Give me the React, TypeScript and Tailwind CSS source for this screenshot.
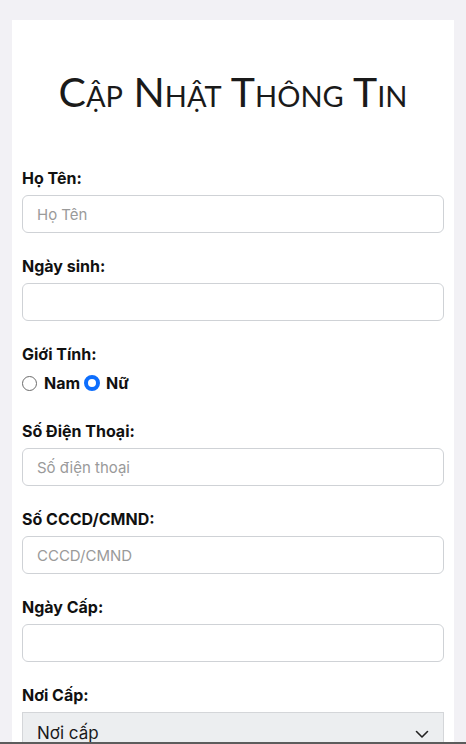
import React from 'react';

const body = { fontFamily: 'Inter, "Liberation Sans", "Noto Sans", sans-serif' };
const title = { fontFamily: 'Lato, "Open Sans", sans-serif', fontVariant: 'small-caps' as const };

function Field({ label, placeholder, type = 'text' }: { label: string; placeholder?: string; type?: string }) {
  return (
    <div className="mb-[23px]">
      <label className="block text-[16px] font-bold leading-[20px] text-[#111] mb-[7px]">{label}</label>
      <input
        type={type}
        placeholder={placeholder}
        className="block w-full h-[38px] rounded-[6px] border border-[#cfd2d6] bg-white px-[14px] text-[15px] text-[#222] placeholder:text-[#9a9a9a] outline-none"
      />
    </div>
  );
}

export default function App() {
  return (
    <div className="min-h-screen bg-[#f2f1f5] px-[12px] pt-[20px]" style={body}>
      <div className="bg-white px-[10px] pb-10">
        <h1 className="pt-[42px] pb-[47px] text-center text-[41px] leading-[59px] font-normal text-[#1a1a1a]" style={title}>
          Cập Nhật Thông Tin
        </h1>

        <Field label="Họ Tên:" placeholder="Họ Tên" />
        <Field label="Ngày sinh:" />

        <div className="mb-[25px]">
          <label className="block text-[16px] font-bold leading-[20px] text-[#111] mb-[6px]">Giới Tính:</label>
          <div className="flex items-center h-[26px] text-[16px] font-bold text-[#111]">
            <span className="w-[15px] h-[15px] rounded-full border border-[#6b6b6b] bg-white" />
            <span className="ml-[7px] mr-[4px]">Nam</span>
            <span className="w-[16px] h-[16px] rounded-full border-[4px] border-[#0d6efd] bg-white" />
            <span className="ml-[6px]">Nữ</span>
          </div>
        </div>

        <Field label="Số Điện Thoại:" placeholder="Số điện thoại" />
        <Field label="Số CCCD/CMND:" placeholder="CCCD/CMND" />
        <Field label="Ngày Cấp:" />

        <div className="mb-[23px]">
          <label className="block text-[16px] font-bold leading-[20px] text-[#111] mb-[7px]">Nơi Cấp:</label>
          <div className="flex items-center justify-between h-[44px] border border-[#d4d6d9] bg-[#eceef0] pl-[14px] pr-[14px]">
            <span className="text-[17px] text-[#1a1a1a]">Nơi cấp</span>
            <svg width="14" height="9" viewBox="0 0 14 9" fill="none">
              <path d="M1.5 1.5L7 7L12.5 1.5" stroke="#222" strokeWidth="1.6" strokeLinecap="round" strokeLinejoin="round" />
            </svg>
          </div>
        </div>

        <Field label="Địa Chỉ:" placeholder="Địa chỉ" />
      </div>
      <div className="fixed bottom-0 left-0 right-0 h-[2px] bg-[#5c5c5c]" />
    </div>
  );
}
